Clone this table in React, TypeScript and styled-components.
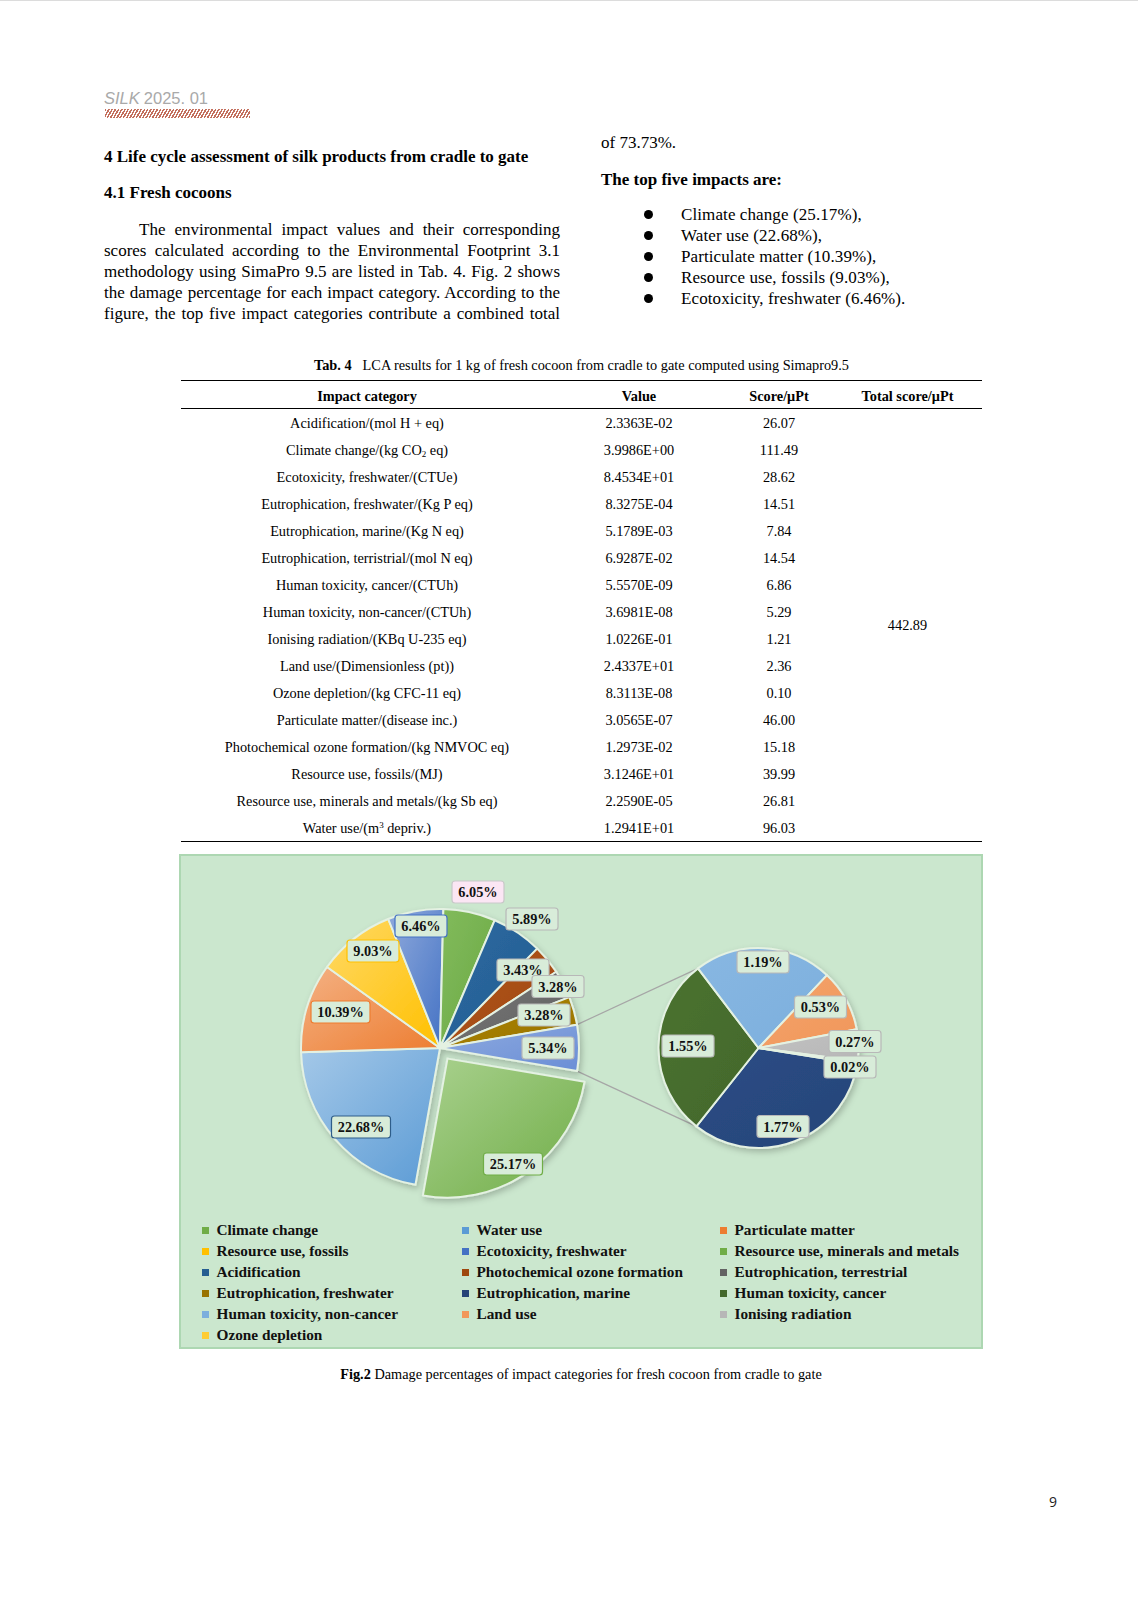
import React from "react";
import styled, { createGlobalStyle } from "styled-components";

const GlobalStyle = createGlobalStyle`
  html, body { margin: 0; padding: 0; background: #fff; }
  body { font-family: "Liberation Serif", "Times New Roman", serif; color: #000; }
`;

const Page = styled.div`
  width: 1138px;
  min-height: 1600px;
  box-sizing: border-box;
  border-top: 1px solid #dcdcdc;
  padding-top: 87px;
  background: #fff;
`;

const RunningHead = styled.div`
  margin-left: 104px;
  font-family: "Liberation Sans", Arial, sans-serif;
  font-size: 16.5px;
  line-height: 20px;
  color: #a9a9a9;
`;

const HeadItalic = styled.span`
  font-style: italic;
  margin-right: 4px;
`;

const Hatch = styled.div`
  margin: 1px 0 0 105px;
  width: 145px;
  height: 9px;
  background: repeating-linear-gradient(120deg, #c4705e 0 1.5px, transparent 1.5px 2.8px);
`;

const Columns = styled.div`
  display: flex;
  align-items: flex-start;
  gap: 41px;
  margin: 11px 0 0 104px;
`;

const LeftCol = styled.div`
  width: 456px;
  padding-top: 16.5px;
`;

const RightCol = styled.div`
  width: 420px;
  padding-top: 2.5px;
`;

const SectionTitle = styled.h2`
  margin: 0;
  font-size: 17px;
  line-height: 21px;
  font-weight: bold;
`;

const SubTitle = styled(SectionTitle)`
  margin-top: 15px;
`;

const Paragraph = styled.div`
  margin-top: 16px;
  font-size: 17px;
  line-height: 21px;
`;

const JLine = styled.span<{ $indent?: boolean }>`
  display: block;
  text-align: justify;
  text-align-last: justify;
  text-indent: ${(p) => (p.$indent ? "35px" : "0")};
`;

const Plain = styled.p`
  margin: 0;
  font-size: 17px;
  line-height: 21px;
`;

const BoldLine = styled.p`
  margin: 16px 0 0;
  font-size: 17px;
  line-height: 21px;
  font-weight: bold;
`;

const BulletList = styled.ul`
  list-style: none;
  margin: 14px 0 0;
  padding: 0 0 0 42.5px;
`;

const BulletItem = styled.li`
  display: flex;
  align-items: center;
  font-size: 17px;
  line-height: 21px;
  letter-spacing: 0.1px;
`;

const Dot = styled.span`
  flex: none;
  width: 9px;
  height: 9px;
  border-radius: 50%;
  background: #000;
  margin-right: 28.5px;
`;

const Figures = styled.div`
  width: 804px;
  margin: 31.5px 0 0 179px;
`;

const TableCaption = styled.div`
  width: 801px;
  margin-left: 2px;
  text-align: center;
  font-size: 14.3px;
  line-height: 20px;
`;

const CaptionTag = styled.b`
  margin-right: 11px;
`;

const DataTable = styled.table`
  width: 801px;
  margin: 5px 0 0 2px;
  border-collapse: collapse;
  table-layout: fixed;
  font-size: 14.3px;
  border-top: 1px solid #000;
  border-bottom: 1px solid #000;
`;

const HeadCell = styled.th<{ $w: number }>`
  width: ${(p) => p.$w}px;
  height: 25px;
  padding: 2px 0 0;
  font-weight: bold;
  text-align: center;
  line-height: 18px;
  border-bottom: 1px solid #000;
`;

const Cell = styled.td`
  height: 27px;
  padding: 0;
  text-align: center;
  vertical-align: middle;
  line-height: 18px;
`;

const Sub = styled.sub`
  font-size: 9px;
  line-height: 0;
  vertical-align: -2px;
`;

const Sup = styled.sup`
  font-size: 9px;
  line-height: 0;
  vertical-align: 5px;
`;

const ChartBox = styled.div`
  margin-top: 12px;
  height: 495px;
  box-sizing: border-box;
  border: 2px solid #add7b2;
  background: #cbe7ce;
  display: flex;
  flex-direction: column;
`;

const PieSvg = styled.svg`
  display: block;
  flex: none;
`;

const Legend = styled.div`
  display: grid;
  grid-template-columns: 260px 258px auto;
  grid-auto-rows: 21px;
  padding-left: 21px;
  font-size: 15.3px;
  font-weight: bold;
  color: #111;
`;

const LegendItem = styled.div`
  display: flex;
  align-items: center;
  white-space: nowrap;
`;

const Swatch = styled.span<{ $c: string }>`
  flex: none;
  width: 7px;
  height: 7px;
  margin: 2px 7.5px 0 0;
  background: ${(p) => p.$c};
`;

const FigCaption = styled.div`
  margin-top: 15px;
  text-align: center;
  font-size: 14.3px;
  line-height: 20px;
`;

const Footer = styled.div`
  margin-top: 108px;
  padding-right: 81px;
  text-align: right;
  font-family: "Open Sans", "Noto Sans", sans-serif;
  font-size: 14px;
  line-height: 20px;
  color: #222;
`;

type Row = { cat: React.ReactNode; value: string; score: string };

const rows: Row[] = [
  { cat: "Acidification/(mol H + eq)", value: "2.3363E-02", score: "26.07" },
  { cat: <>Climate change/(kg CO<Sub>2</Sub> eq)</>, value: "3.9986E+00", score: "111.49" },
  { cat: "Ecotoxicity, freshwater/(CTUe)", value: "8.4534E+01", score: "28.62" },
  { cat: "Eutrophication, freshwater/(Kg P eq)", value: "8.3275E-04", score: "14.51" },
  { cat: "Eutrophication, marine/(Kg N eq)", value: "5.1789E-03", score: "7.84" },
  { cat: "Eutrophication, terristrial/(mol N eq)", value: "6.9287E-02", score: "14.54" },
  { cat: "Human toxicity, cancer/(CTUh)", value: "5.5570E-09", score: "6.86" },
  { cat: "Human toxicity, non-cancer/(CTUh)", value: "3.6981E-08", score: "5.29" },
  { cat: "Ionising radiation/(KBq U-235 eq)", value: "1.0226E-01", score: "1.21" },
  { cat: "Land use/(Dimensionless (pt))", value: "2.4337E+01", score: "2.36" },
  { cat: "Ozone depletion/(kg CFC-11 eq)", value: "8.3113E-08", score: "0.10" },
  { cat: "Particulate matter/(disease inc.)", value: "3.0565E-07", score: "46.00" },
  { cat: "Photochemical ozone formation/(kg NMVOC eq)", value: "1.2973E-02", score: "15.18" },
  { cat: "Resource use, fossils/(MJ)", value: "3.1246E+01", score: "39.99" },
  { cat: "Resource use, minerals and metals/(kg Sb eq)", value: "2.2590E-05", score: "26.81" },
  { cat: <>Water use/(m<Sup>3</Sup> depriv.)</>, value: "1.2941E+01", score: "96.03" },
];

type SliceDef = { score: number; base: string; light: string; explode?: boolean };

const mainSlices: SliceDef[] = [
  { score: 111.49, base: "#70ad47", light: "#a9d18e", explode: true },
  { score: 96.03, base: "#5b9bd5", light: "#a4c8e8" },
  { score: 46.0, base: "#ed7d31", light: "#f4b183" },
  { score: 39.99, base: "#ffc000", light: "#ffd966" },
  { score: 28.62, base: "#4472c4", light: "#8faadc" },
  { score: 26.81, base: "#6aa843", light: "#82bb5c" },
  { score: 26.07, base: "#245d90", light: "#2c6aa2" },
  { score: 15.18, base: "#9e480e", light: "#b3561a" },
  { score: 14.54, base: "#636363", light: "#777777" },
  { score: 14.51, base: "#997300", light: "#ad850c" },
  { score: 23.66, base: "#6a8ed6", light: "#8eaadf" },
];

const subSlices: SliceDef[] = [
  { score: 7.84, base: "#264478", light: "#2b4d86" },
  { score: 6.86, base: "#43682b", light: "#4a7230" },
  { score: 5.29, base: "#7cafdd", light: "#88b7e2" },
  { score: 2.36, base: "#f1975a", light: "#f3a36c" },
  { score: 1.21, base: "#b7b7b7", light: "#c2c2c2" },
  { score: 0.1, base: "#ffcd33", light: "#ffd966" },
];

const MAIN = { cx: 259, cy: 192, r: 139, start: 99.56 };
const SUB = { cx: 577.5, cy: 192, r: 100, start: 99.1 };

const rad = (d: number) => (d * Math.PI) / 180;
const pt = (cx: number, cy: number, r: number, a: number) => [cx + r * Math.sin(rad(a)), cy - r * Math.cos(rad(a))];

function arc(cx: number, cy: number, r: number, a0: number, a1: number) {
  const [x0, y0] = pt(cx, cy, r, a0);
  const [x1, y1] = pt(cx, cy, r, a1);
  const large = a1 - a0 > 180 ? 1 : 0;
  return `M${cx.toFixed(2)} ${cy.toFixed(2)} L${x0.toFixed(2)} ${y0.toFixed(2)} A${r} ${r} 0 ${large} 1 ${x1.toFixed(2)} ${y1.toFixed(2)} Z`;
}

function buildSlices(defs: SliceDef[], pie: { cx: number; cy: number; r: number; start: number }, prefix: string, explodeBy = 0) {
  const total = defs.reduce((s, d) => s + d.score, 0);
  let a = pie.start;
  return defs.map((d, i) => {
    const span = (d.score / total) * 360;
    const a0 = a;
    const a1 = a + span;
    a = a1;
    let cx = pie.cx;
    let cy = pie.cy;
    if (d.explode) {
      const mid = (a0 + a1) / 2;
      cx += explodeBy * Math.sin(rad(mid));
      cy -= explodeBy * Math.cos(rad(mid));
    }
    return { id: `${prefix}${i}`, d: arc(cx, cy, pie.r, a0, a1), base: d.base, light: d.light };
  });
}

const mainPaths = buildSlices(mainSlices, MAIN, "m", 13);
const subPaths = buildSlices(subSlices, SUB, "s");

type Lbl = { x: number; y: number; t: string; fill?: string; stroke?: string };

const labels: Lbl[] = [
  { x: 297, y: 36, t: "6.05%", fill: "#fbe6f4", stroke: "#c9c9c9" },
  { x: 351, y: 63, t: "5.89%" },
  { x: 240, y: 70, t: "6.46%", stroke: "#4472c4" },
  { x: 192, y: 95, t: "9.03%", stroke: "#ffc000" },
  { x: 342, y: 114, t: "3.43%" },
  { x: 377, y: 130.5, t: "3.28%" },
  { x: 363, y: 159, t: "3.28%" },
  { x: 159.5, y: 156, t: "10.39%", stroke: "#ed7d31" },
  { x: 367, y: 192, t: "5.34%" },
  { x: 180, y: 271, t: "22.68%", stroke: "#2e5d8a" },
  { x: 332, y: 308, t: "25.17%", stroke: "#70ad47" },
  { x: 582, y: 106, t: "1.19%" },
  { x: 639.5, y: 151, t: "0.53%" },
  { x: 507, y: 190, t: "1.55%" },
  { x: 674, y: 185.5, t: "0.27%" },
  { x: 669, y: 211, t: "0.02%" },
  { x: 602, y: 270.5, t: "1.77%" },
];

const legendItems: [string, string][] = [
  ["Climate change", "#70ad47"],
  ["Water use", "#5b9bd5"],
  ["Particulate matter", "#ed7d31"],
  ["Resource use, fossils", "#ffc000"],
  ["Ecotoxicity, freshwater", "#4472c4"],
  ["Resource use, minerals and metals", "#70ad47"],
  ["Acidification", "#255e91"],
  ["Photochemical ozone formation", "#9e480e"],
  ["Eutrophication, terrestrial", "#636363"],
  ["Eutrophication, freshwater", "#997300"],
  ["Eutrophication, marine", "#264478"],
  ["Human toxicity, cancer", "#43682b"],
  ["Human toxicity, non-cancer", "#7cafdd"],
  ["Land use", "#f1975a"],
  ["Ionising radiation", "#b7b7b7"],
  ["Ozone depletion", "#ffcd33"],
];

function PieChart() {
  const [ux, uy] = pt(MAIN.cx, MAIN.cy, MAIN.r, 80.33);
  const [lx, ly] = pt(MAIN.cx, MAIN.cy, MAIN.r, 99.56);
  const [sux, suy] = pt(SUB.cx, SUB.cy, SUB.r, 322.8);
  const [slx, sly] = pt(SUB.cx, SUB.cy, SUB.r, 218.4);
  return (
    <PieSvg width={800} height={363} viewBox="0 0 800 363">
      <defs>
        {[...mainPaths, ...subPaths].map((p) => (
          <linearGradient key={p.id} id={`g-${p.id}`} x1="0" y1="0" x2="1" y2="1">
            <stop offset="0" stopColor={p.light} />
            <stop offset="1" stopColor={p.base} />
          </linearGradient>
        ))}
        <filter id="pieShadow" x="-20%" y="-20%" width="140%" height="140%">
          <feDropShadow dx="2" dy="3" stdDeviation="3" floodColor="#000" floodOpacity="0.22" />
        </filter>
      </defs>
      <line x1={ux} y1={uy} x2={sux} y2={suy} stroke="#a6a6a6" strokeWidth={1.2} />
      <line x1={lx} y1={ly} x2={slx} y2={sly} stroke="#a6a6a6" strokeWidth={1.2} />
      <g filter="url(#pieShadow)">
        {mainPaths.map((p) => (
          <path key={p.id} d={p.d} fill={`url(#g-${p.id})`} stroke="#e4f1e2" strokeWidth={2} strokeLinejoin="round" />
        ))}
      </g>
      <g filter="url(#pieShadow)">
        {subPaths.map((p) => (
          <path key={p.id} d={p.d} fill={`url(#g-${p.id})`} stroke="#e4f1e2" strokeWidth={2} strokeLinejoin="round" />
        ))}
      </g>
      {labels.map((l, i) => {
        const w = l.t.length >= 6 ? 59 : 52;
        return (
          <g key={i}>
            <rect
              x={l.x - w / 2}
              y={l.y - 11}
              width={w}
              height={22}
              rx={3}
              fill={l.fill ?? "#d8ecd9"}
              stroke={l.stroke ?? "#b8b8b8"}
              strokeWidth={1.2}
            />
            <text
              x={l.x}
              y={l.y + 5}
              textAnchor="middle"
              fontFamily='"Liberation Serif", "Times New Roman", serif'
              fontWeight="bold"
              fontSize="14.3"
              fill="#111"
            >
              {l.t}
            </text>
          </g>
        );
      })}
    </PieSvg>
  );
}

export default function App() {
  return (
    <>
      <GlobalStyle />
      <Page>
        <RunningHead>
          <HeadItalic>SILK</HeadItalic>2025. 01
        </RunningHead>
        <Hatch />
        <Columns>
          <LeftCol>
            <SectionTitle>4 Life cycle assessment of silk products from cradle to gate</SectionTitle>
            <SubTitle>4.1 Fresh cocoons</SubTitle>
            <Paragraph>
              <JLine $indent>The environmental impact values and their corresponding</JLine>
              <JLine>scores calculated according to the Environmental Footprint 3.1</JLine>
              <JLine>methodology using SimaPro 9.5 are listed in Tab. 4. Fig. 2 shows</JLine>
              <JLine>the damage percentage for each impact category. According to the</JLine>
              <JLine>figure, the top five impact categories contribute a combined total</JLine>
            </Paragraph>
          </LeftCol>
          <RightCol>
            <Plain>of 73.73%.</Plain>
            <BoldLine>The top five impacts are:</BoldLine>
            <BulletList>
              <BulletItem><Dot />Climate change (25.17%),</BulletItem>
              <BulletItem><Dot />Water use (22.68%),</BulletItem>
              <BulletItem><Dot />Particulate matter (10.39%),</BulletItem>
              <BulletItem><Dot />Resource use, fossils (9.03%),</BulletItem>
              <BulletItem><Dot />Ecotoxicity, freshwater (6.46%).</BulletItem>
            </BulletList>
          </RightCol>
        </Columns>
        <Figures>
          <TableCaption>
            <CaptionTag>Tab. 4</CaptionTag>LCA results for 1 kg of fresh cocoon from cradle to gate computed using Simapro9.5
          </TableCaption>
          <DataTable>
            <thead>
              <tr>
                <HeadCell $w={372}>Impact category</HeadCell>
                <HeadCell $w={172}>Value</HeadCell>
                <HeadCell $w={108}>Score/μPt</HeadCell>
                <HeadCell $w={149}>Total score/μPt</HeadCell>
              </tr>
            </thead>
            <tbody>
              {rows.map((r, i) => (
                <tr key={i}>
                  <Cell>{r.cat}</Cell>
                  <Cell>{r.value}</Cell>
                  <Cell>{r.score}</Cell>
                  {i === 0 && <Cell rowSpan={rows.length}>442.89</Cell>}
                </tr>
              ))}
            </tbody>
          </DataTable>
          <ChartBox>
            <PieChart />
            <Legend>
              {legendItems.map(([name, c]) => (
                <LegendItem key={name}>
                  <Swatch $c={c} />
                  {name}
                </LegendItem>
              ))}
            </Legend>
          </ChartBox>
          <FigCaption>
            <b>Fig.2</b> Damage percentages of impact categories for fresh cocoon from cradle to gate
          </FigCaption>
        </Figures>
        <Footer>9</Footer>
      </Page>
    </>
  );
}
